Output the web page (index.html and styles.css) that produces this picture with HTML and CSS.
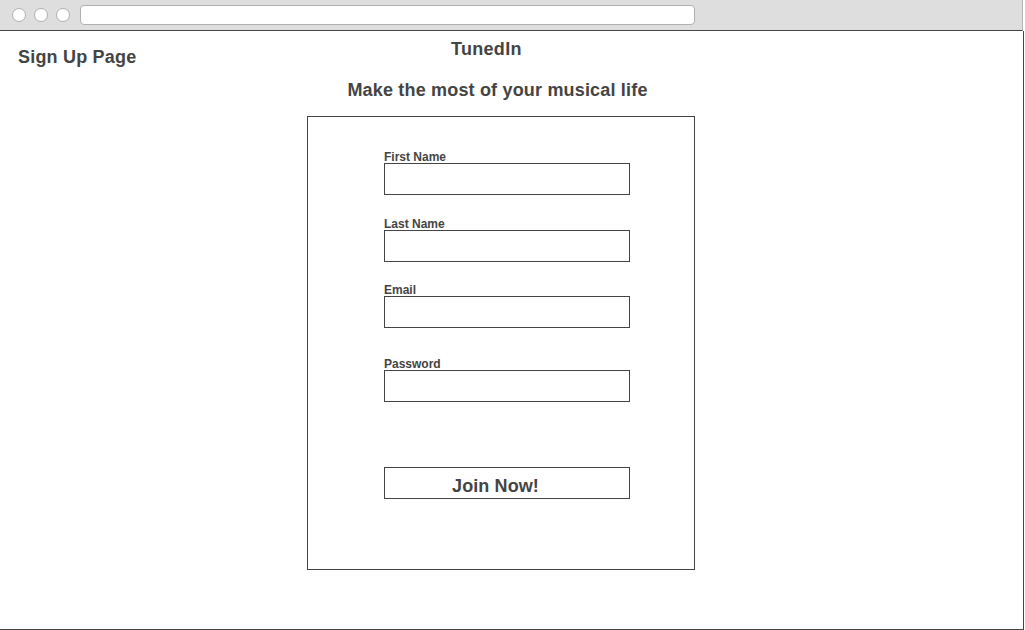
FILE: index.html
```html
<!DOCTYPE html>
<html lang="en">
<head>
<meta charset="utf-8">
<title>Sign Up Page</title>
<link rel="stylesheet" href="styles.css">
</head>
<body>
<div class="window">
  <div class="chrome">
    <span class="dot"></span>
    <span class="dot"></span>
    <span class="dot"></span>
    <span class="url"></span>
  </div>
  <div class="content">
    <div class="header">
      <div class="page-label">Sign Up Page</div>
      <div class="brand">TunedIn</div>
    </div>
    <div class="main">
      <div class="tagline">Make the most of your musical life</div>
      <form class="form-box">
        <div class="field">
          <label class="label">First Name</label>
          <div class="input"></div>
        </div>
        <div class="field field-22">
          <label class="label">Last Name</label>
          <div class="input"></div>
        </div>
        <div class="field field-21">
          <label class="label">Email</label>
          <div class="input"></div>
        </div>
        <div class="field field-29">
          <label class="label">Password</label>
          <div class="input"></div>
        </div>
        <div class="button">Join Now!</div>
      </form>
    </div>
  </div>
</div>
</body>
</html>
```
FILE: styles.css
```css
* { box-sizing: border-box; }
html, body { margin: 0; padding: 0; background: #ffffff; }
body {
  font-family: "Liberation Sans", Arial, Helvetica, sans-serif;
  color: #444444;
  width: 1025px;
  height: 630px;
  overflow: hidden;
}
.window { width: 1024px; }
.chrome {
  height: 31px;
  width: 1023px;
  background: #dedede;
  border-bottom: 1px solid #444444;
  border-right: 1px solid #b4b4b4;
  display: flex;
  align-items: center;
  padding-left: 12px;
  gap: 8px;
}
.dot {
  width: 14px;
  height: 14px;
  border-radius: 50%;
  background: #ffffff;
  border: 1px solid #b0b0b0;
  flex: none;
}
.url {
  margin-left: 2px;
  width: 615px;
  height: 20px;
  background: #ffffff;
  border: 1px solid #b0b0b0;
  border-radius: 4px;
}
.content {
  height: 599px;
  border-right: 1px solid #444444;
  border-bottom: 1px solid #444444;
}
.header {
  display: flex;
  align-items: flex-start;
  padding-top: 8px;
  padding-left: 18px;
}
.page-label {
  width: 433px;
  margin-top: 8px;
  font-size: 18px;
  line-height: 21px;
  font-weight: bold;
  letter-spacing: 0.2px;
}
.brand {
  font-size: 18px;
  line-height: 21px;
  font-weight: bold;
  letter-spacing: 0.3px;
}
.main {
  margin-left: 307px;
  width: 388px;
  padding-top: 12px;
}
.tagline {
  font-size: 18px;
  line-height: 21px;
  font-weight: bold;
  letter-spacing: 0.18px;
  text-align: center;
  padding-right: 7px;
  margin-bottom: 15px;
}
.form-box {
  margin: 0;
  border: 1px solid #444444;
  padding: 33px 0 70px 76px;
  display: flex;
  flex-direction: column;
}
.field {
  display: flex;
  flex-direction: column;
  width: 246px;
}
.field-22 { margin-top: 22px; }
.field-21 { margin-top: 21px; }
.field-29 { margin-top: 29px; }
.label {
  height: 13px;
  font-size: 12px;
  line-height: 15px;
  font-weight: bold;
}
.input {
  height: 32px;
  border: 1px solid #444444;
  background: #ffffff;
}
.button {
  margin-top: 65px;
  width: 246px;
  height: 32px;
  border: 1px solid #444444;
  padding-top: 6px;
  font-size: 18px;
  line-height: 24px;
  font-weight: bold;
  letter-spacing: 0.1px;
  text-align: center;
  padding-right: 23px;
}
```
